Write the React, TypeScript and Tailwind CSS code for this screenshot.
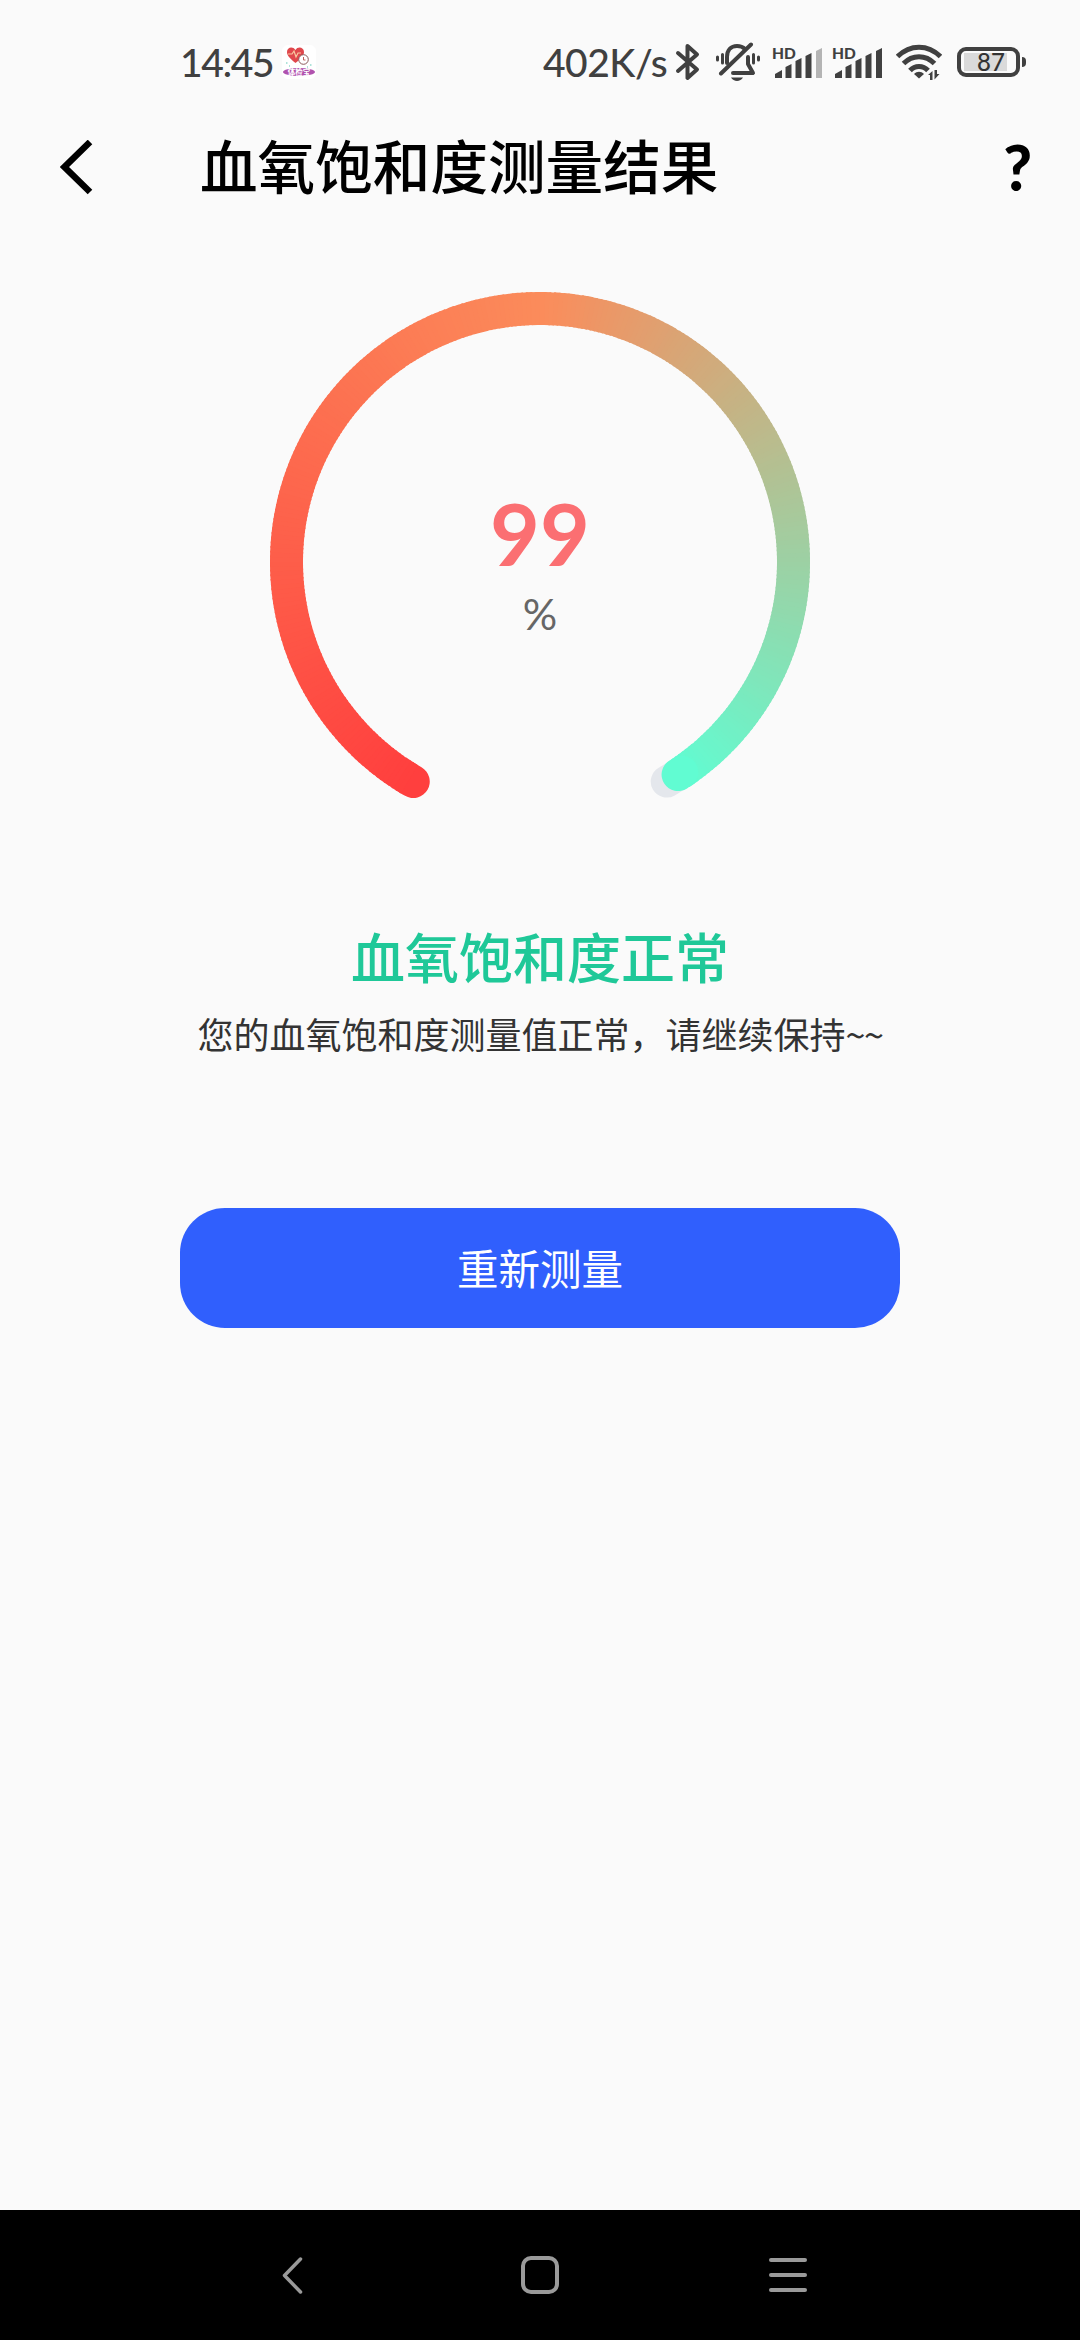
const START = [255, 63, 62];
const MIDDLE = [251, 140, 91];
const END = [93, 255, 213];

const RADIUS = 253.5;
const CENTER = 270;
const SWEEP = 300;

function pointAt(deg: number) {
  // 0deg is the start of the arc, at the bottom left
  const rad = ((deg + 120) * Math.PI) / 180;
  return `${(CENTER + RADIUS * Math.cos(rad)).toFixed(2)} ${(CENTER + RADIUS * Math.sin(rad)).toFixed(2)}`;
}

function colorAt(t: number) {
  const [from, to, k]: [number[], number[], number] =
    t < 0.5 ? [START, MIDDLE, t * 2] : [MIDDLE, END, t * 2 - 1];
  const channels = from.map((c, i) => Math.round(c + (to[i] - c) * k));
  return `rgb(${channels.join(",")})`;
}

function Gauge({ value }: { value: number }) {
  const end = (SWEEP * value) / 100;
  const steps = Math.round(end);

  return (
    <svg width="540" height="540" viewBox="0 0 540 540" fill="none">
      <path
        d={`M${pointAt(0)}A${RADIUS} ${RADIUS} 0 1 1 ${pointAt(SWEEP)}`}
        stroke="#e4e7ec"
        strokeWidth="32"
        strokeLinecap="round"
      />
      {Array.from({ length: steps }, (_, i) => (
        <path
          key={i}
          d={`M${pointAt(i)}A${RADIUS} ${RADIUS} 0 0 1 ${pointAt(Math.min(i + 1.4, end))}`}
          stroke={colorAt(i / SWEEP)}
          strokeWidth="33"
          strokeLinecap={i === 0 || i === steps - 1 ? "round" : "butt"}
        />
      ))}
    </svg>
  );
}

function AppBadge() {
  return (
    <svg width="34" height="34" viewBox="0 0 34 34" fill="none">
      <rect width="34" height="34" rx="6" fill="#fff" />
      <path
        d="M13.500 18C7 13 5 10 5 7c0-5 6-6 8.500-2 2-4 8.500-3 8.500 2 0 3-2 6-8.500 11Z"
        fill="#e0474c"
      />
      <path d="M6 9h4l2-3 2 6 2-4h3" stroke="#f7c9a0" strokeWidth="1.2" />
      <circle cx="21.500" cy="14.500" r="4.800" fill="#fff" stroke="#8b5a5a" />
      <path d="M21.500 12v3h2" stroke="#c0605c" />
      <path d="M4 18h1.500M7 21h1M28 20h1.500M25 22h1" stroke="#5fc7b5" />
      <ellipse cx="17" cy="27" rx="16" ry="4" fill="#b052ae" />
      <text
        x="17"
        y="29.800"
        textAnchor="middle"
        fill="#fff"
        fontSize="7.500"
        fontWeight="700"
      >
        体检宝
      </text>
    </svg>
  );
}

function Bluetooth() {
  return (
    <svg width="26" height="40" viewBox="0 0 26 40" fill="none">
      <path
        d="M3 11l19 16.500L12.500 36V4L22 12.500 3 29"
        stroke="#404040"
        strokeWidth="4"
        strokeLinecap="round"
        strokeLinejoin="round"
      />
    </svg>
  );
}

function BellOff() {
  return (
    <svg width="46" height="40" viewBox="0 0 46 40" fill="none">
      <g stroke="#404040" strokeWidth="4" strokeLinecap="round">
        <path d="M12 21v-6C12 8 16 4 22 4c4 0 6 1 8 3" />
        <path d="M33 15v7l5 9H18" strokeLinejoin="round" />
        <path d="M6 31.500L36 2.500" />
        <path
          d="M2.500 15v3M7.500 12.500v8.500M38.500 12.500v8.500M43.500 15v3"
          strokeWidth="3"
        />
      </g>
      <path d="M16 35.500h12c-2.500 4.500-9.500 4.500-12 0Z" fill="#404040" />
    </svg>
  );
}

function Signal({ weak }: { weak?: boolean }) {
  return (
    <div className="grid h-[34px] w-[52px] *:col-start-1 *:row-start-1">
      <svg width="52" height="34" viewBox="0 0 52 34" fill="#404040">
        <path d="M3 33v-4l7-4v8Z" />
        <path d="M13.500 33V22l6-3v14Z" />
        <path d="M23.500 33V16l6-3v20Z" />
        <path d="M33.500 33V11l6-3v25Z" />
        <path d="M44 33V6l6-3v30Z" fill={weak ? "#b4b4b4" : "#404040"} />
      </svg>
      <span className="text-[15.5px] leading-4 font-black">HD</span>
    </div>
  );
}

function Wifi() {
  return (
    <svg width="46" height="36" viewBox="0 0 46 36" fill="none">
      <g stroke="#404040" strokeWidth="5">
        <path d="M1.500 12.500C14 0 32 0 44.500 12.500" />
        <path d="M7.500 19.500c9-9 22-9 31 0" />
        <path d="M14 26.500c5-5.500 13-5.500 18 0" />
      </g>
      <path d="M18 30c3-3 7-3 10 0l-5 4.500Z" fill="#404040" />
      <path
        d="M32 31l4.500-4v9H34v-5ZM38.500 26v9.500l5-5.500H41v-4Z"
        fill="#404040"
      />
    </svg>
  );
}

function Battery({ level }: { level: number }) {
  return (
    <div className="flex items-center gap-0.5">
      <div className="flex h-[30px] w-[63px] items-center rounded-[9px] border-4 border-[#404040] px-[3px]">
        <div className="flex h-[18px] w-[43px] items-center justify-end bg-[#dadada]">
          <span className="w-8 text-center text-[24px] leading-none text-[#333]">
            {level}
          </span>
        </div>
      </div>
      <div className="h-[10px] w-1 rounded-r-sm bg-[#404040]" />
    </div>
  );
}

function StatusBar() {
  return (
    <div className="flex h-[124px] items-center pl-[180px] font-[Lato,'Noto_Sans_CJK_SC',sans-serif] text-[39px] font-medium text-[#404040]">
      <span className="w-[102px] tracking-[-1.4px]">14:45</span>
      <AppBadge />
      <div className="ml-[227px] flex items-center">
        <span className="w-[132px] tracking-[-0.5px]">402K/s</span>
        <Bluetooth />
        <div className="ml-3.5">
          <BellOff />
        </div>
        <div className="ml-[11px] flex gap-2">
          <Signal weak />
          <Signal />
        </div>
        <div className="ml-3 mr-[15px]">
          <Wifi />
        </div>
        <Battery level={87} />
      </div>
    </div>
  );
}

function Header() {
  return (
    <header className="flex h-[88px] items-center pl-[60px] pr-[48px] text-black">
      <button type="button" aria-label="返回">
        <svg width="34" height="56" viewBox="0 0 34 56" fill="none">
          <path d="M30 2L4.500 27 30 52" stroke="#000" strokeWidth="6.500" />
        </svg>
      </button>
      <h1 className="ml-[106px] flex-1 pb-1.5 text-[57.6px] leading-none font-medium">
        血氧饱和度测量结果
      </h1>
      <button
        type="button"
        className="pb-0.5 font-[Lato,sans-serif] text-[62px] leading-none font-black"
        aria-label="帮助"
      >
        ?
      </button>
    </header>
  );
}

function NavBar() {
  return (
    <nav className="flex h-[130px] items-center justify-between bg-black px-[273px]">
      <svg width="38" height="40" viewBox="0 0 38 40" fill="none">
        <path
          d="M27.500 4L11.500 20.500l16 16.500"
          stroke="#9a9a9a"
          strokeWidth="3.500"
          strokeLinecap="round"
          strokeLinejoin="round"
        />
      </svg>
      <div className="h-[38px] w-[38px] rounded-[10px] border-4 border-[#9a9a9a]" />
      <div className="flex w-[38px] flex-col gap-[11px]">
        <div className="h-1 rounded-full bg-[#9a9a9a]" />
        <div className="h-1 rounded-full bg-[#9a9a9a]" />
        <div className="h-1 rounded-full bg-[#9a9a9a]" />
      </div>
    </nav>
  );
}

export default function App() {
  return (
    <div className="flex h-[2340px] w-[1080px] flex-col bg-[#fafafa] font-['Noto_Sans_CJK_SC',sans-serif]">
      <StatusBar />
      <Header />

      <main className="flex flex-1 flex-col items-center pt-20">
        <div className="grid place-items-center *:col-start-1 *:row-start-1">
          <Gauge value={99} />
          <div className="flex flex-col items-center pt-[18px] font-[Lato,sans-serif]">
            <span className="text-[86px] leading-[86px] font-bold text-[#fb6f72]">
              99
            </span>
            <span className="text-[43px] leading-[76px] text-[#666]">%</span>
          </div>
        </div>

        <h2 className="mt-[97px] text-[54px] leading-[54px] font-medium text-[#1fc898]">
          血氧饱和度正常
        </h2>
        <p className="mt-[32px] text-[36px] leading-[36px] text-[#333]">
          您的血氧饱和度测量值正常，请继续保持
          <span className="tracking-[-1.5px]">~~</span>
        </p>

        <button
          type="button"
          className="mt-[157px] h-[120px] w-[720px] rounded-[45px] bg-[#305ffd] pb-0.5 text-[41.5px] text-white"
        >
          重新测量
        </button>
      </main>

      <NavBar />
    </div>
  );
}
